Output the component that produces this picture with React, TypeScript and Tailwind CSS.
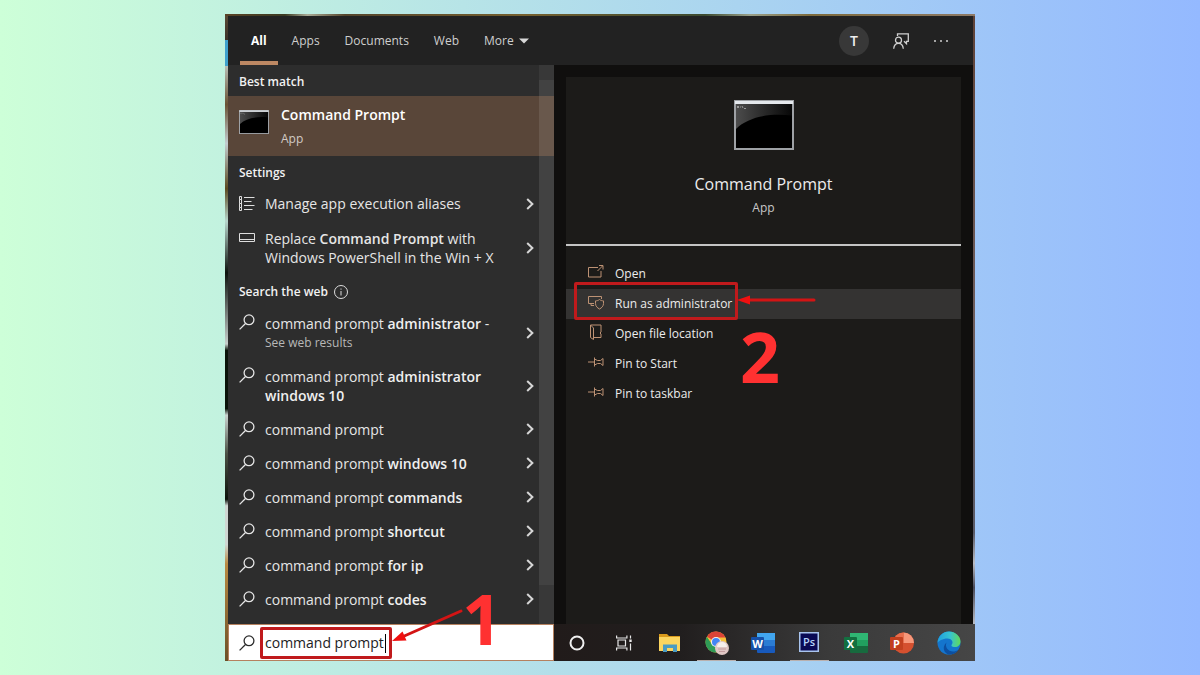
import { useState, type ReactNode } from 'react';

interface SearchResult {
  query: string;
  suffix?: string;
  tail?: string;
  note?: string;
  tall?: boolean;
}

const tabs = ['All', 'Apps', 'Documents', 'Web', 'More'];

const webResults: SearchResult[] = [
  { query: 'command prompt', suffix: 'administrator', tail: ' -', note: 'See web results', tall: true },
  { query: 'command prompt', suffix: 'administrator windows 10', tall: true },
  { query: 'command prompt' },
  { query: 'command prompt', suffix: 'windows 10' },
  { query: 'command prompt', suffix: 'commands' },
  { query: 'command prompt', suffix: 'shortcut' },
  { query: 'command prompt', suffix: 'for ip' },
  { query: 'command prompt', suffix: 'codes' },
];

function SearchIcon() {
  return (
    <svg className="h-4 w-4 shrink-0" viewBox="0 0 16 16" fill="none" stroke="currentColor" strokeWidth="1.3">
      <circle cx="10" cy="5.8" r="4.9" />
      <path d="M6.5 9.5 0.6 15.4" />
    </svg>
  );
}

function ChevronIcon() {
  return (
    <svg className="h-3 w-2 shrink-0" viewBox="0 0 8 12" fill="none" stroke="#d6d6d6" strokeWidth="2">
      <path d="M1.2 1 6.4 6 1.2 11" />
    </svg>
  );
}

function ListIcon() {
  return (
    <svg className="h-4 w-4 shrink-0" viewBox="0 0 16 16" fill="none" stroke="#dedede">
      <path d="M0.5 0.5h2v3h-2zM0.5 3.5h2v4h-2zM0.5 7.500h2v4h-2zM0.5 11.500h2v3h-2z" />
      <path d="M5 1.500h10.5M5 5.500h7.5M5 9.500h10.5M5 13.500h8.5" />
    </svg>
  );
}

function PanelIcon() {
  return (
    <svg className="h-4 w-4 shrink-0" viewBox="0 0 16 16" fill="none" stroke="#dedede">
      <path d="M0.5 2.5h15v8h-15zM0.5 8.5h15" />
    </svg>
  );
}

function ConsoleIcon({ className }: { className: string }) {
  return (
    <svg className={className} viewBox="0 0 60 50" preserveAspectRatio="none">
      <defs>
        <linearGradient id="shine" x1="0" y1="0" x2="1" y2="0">
          <stop offset="0" stopColor="#4c4c4c" />
          <stop offset="1" stopColor="#070707" />
        </linearGradient>
      </defs>
      <rect width="60" height="50" fill="#9ea1a5" />
      <rect x="1" y="1" width="58" height="3" fill="#e4e8ec" />
      <rect x="2" y="4" width="56" height="44" fill="#000" />
      <path d="M2 4h56v11.500C34 13 14 17 2 29z" fill="url(#shine)" />
      <path d="M3 6.500h2M3 7.500h2M6 7h1M8 6l1 2M10 8.500h2" stroke="#999" strokeWidth="1" fill="none" />
    </svg>
  );
}

function ActionIcon({ children }: { children: ReactNode }) {
  return (
    <svg className="mb-1 h-4 w-4 shrink-0" viewBox="0 0 16 16" fill="none" stroke="#bd9274" strokeWidth="1">
      {children}
    </svg>
  );
}

const pinShape = <path d="M0 8h6M6.500 3.500v9M6.500 5l3 1.500h3L15 4.500v7l-2.500-2h-3l-3 1.500" />;

const actions = [
  {
    label: 'Open',
    icon: <path d="M10 3.500H0.500v9.500h12.500V7M9.500 7l5-5M11 1.500h4v4" />,
  },
  {
    label: 'Run as administrator',
    icon: (
      <>
        <path d="M6 9.500H0.500v-7h13v2.500M3 9.500v2h3" />
        <path d="M11.500 5.500c-1.200 1-2.500 1.300-4 1.400v2.600c0 2.600 1.800 4.400 4 5.500 2.200-1.100 4-2.900 4-5.500V6.900c-1.500-.1-2.800-.4-4-1.400z" />
      </>
    ),
  },
  {
    label: 'Open file location',
    icon: <path d="M5.500 13.500h7.500v-3.500l-1-1 1-1V1H2.500v12.500l3 2V4L2.500 1" />,
  },
  { label: 'Pin to Start', icon: pinShape },
  { label: 'Pin to taskbar', icon: pinShape },
];

function Heading({ children }: { children: ReactNode }) {
  return (
    <h2 className="flex h-[31px] items-center gap-[6px] pt-[2px] pl-[11px] text-xs font-semibold text-[#f2f2f2]">
      {children}
    </h2>
  );
}

function OfficeIcon({ letter, dark, mid, light, tile }: { letter: string; dark: string; mid: string; light: string; tile: string }) {
  return (
    <svg className="h-6 w-6" viewBox="0 0 24 24">
      <rect x="6" y="2" width="18" height="20" rx="1" fill={dark} />
      <rect x="6" y="2" width="18" height="7" fill={light} />
      <rect x="6" y="9" width="18" height="6" fill={mid} />
      <rect x="0" y="6" width="13" height="13" rx="1" fill={tile} />
      <text x="6.500" y="16.500" textAnchor="middle" fontSize="11" fontWeight="700" fill="#fff">{letter}</text>
    </svg>
  );
}

const taskbarApps = [
  {
    name: 'Cortana',
    icon: (
      <svg className="h-4 w-4" viewBox="0 0 16 16" fill="none" stroke="#f0f0f0" strokeWidth="2">
        <circle cx="8" cy="8" r="6.500" />
      </svg>
    ),
  },
  {
    name: 'Task view',
    icon: (
      <svg className="h-4 w-4" viewBox="0 0 16 16" fill="none" stroke="#e6e6e6" strokeWidth="1.2">
        <path d="M0.600 0.500v2.500h10.300V0.500M0.600 15.500V13h10.300v2.500M2 5h7.500v6H2zM14.500 0.500v3M14.500 8.500v7" />
        <path d="M13.300 4.500h2.400v2.500h-2.400z" fill="#e6e6e6" stroke="none" />
      </svg>
    ),
  },
  {
    name: 'File Explorer',
    icon: (
      <svg className="h-5 w-6" viewBox="0 0 24 20">
        <path d="M1 1h8l2 2h11v4H1z" fill="#d99a1c" />
        <path d="M1 4h21v14H1z" fill="#fbd55f" />
        <path d="M5 19v-7.500h14V19h-4v-4H9v4z" fill="#4a9bc2" />
      </svg>
    ),
  },
  {
    name: 'Chrome',
    active: true,
    icon: (
      <svg className="h-6 w-6" viewBox="0 0 24 24">
        <circle cx="11" cy="11" r="10.500" fill="#f5c23a" />
        <path d="M11 11 1.900 5.700A10.500 10.500 0 0 1 20.500 6.500H11z" fill="#dc4437" />
        <path d="M11 11 7 13.500 1.900 5.700A10.500 10.500 0 0 0 11 21.500l4-8z" fill="#2f9c56" />
        <circle cx="11" cy="11" r="5" fill="#f3f3f3" />
        <circle cx="11" cy="11" r="4" fill="#4285f4" />
        <circle cx="17" cy="17" r="7" fill="#e0c7c5" />
        <path d="M12 16a5 5 0 0 1 10 0z" fill="#f6efec" />
        <path d="M13 18h8M14 20.500h6" stroke="#c49d9f" />
      </svg>
    ),
  },
  { name: 'Word', icon: <OfficeIcon letter="W" light="#41a5ee" mid="#2b7cd3" dark="#185abd" tile="#1650a8" /> },
  {
    name: 'Photoshop',
    active: true,
    icon: (
      <svg className="mb-[2px] h-5 w-5" viewBox="0 0 20 20">
        <rect x="0.750" y="0.750" width="18.500" height="18.500" fill="#0a0a55" stroke="#a9c4ee" strokeWidth="1.500" />
        <text x="10" y="14" textAnchor="middle" fontSize="11" fontWeight="600" fill="#b5d2fa">Ps</text>
      </svg>
    ),
  },
  { name: 'Excel', icon: <OfficeIcon letter="X" light="#2fb673" mid="#21a05f" dark="#176a3e" tile="#127040" /> },
  {
    name: 'PowerPoint',
    icon: (
      <svg className="h-6 w-6" viewBox="0 0 24 24">
        <circle cx="13.500" cy="12" r="10.500" fill="#d5502f" />
        <path d="M13.500 1.500A10.500 10.500 0 0 1 24 12H13.500z" fill="#f6977a" />
        <path d="M13.500 1.500A10.500 10.500 0 0 0 3 12h10.500z" fill="#e86d4c" />
        <rect x="0" y="6" width="13" height="13" rx="1" fill="#c2401f" />
        <text x="6.500" y="16.500" textAnchor="middle" fontSize="11" fontWeight="700" fill="#fff">P</text>
      </svg>
    ),
  },
  {
    name: 'Edge',
    icon: (
      <svg className="h-6 w-6" viewBox="0 0 24 24">
        <defs>
          <linearGradient id="edgeTop" x1="0" y1="0.500" x2="1" y2="0.500">
            <stop offset="0" stopColor="#1f9fdf" />
            <stop offset="0.550" stopColor="#36c3d0" />
            <stop offset="1" stopColor="#62d957" />
          </linearGradient>
        </defs>
        <circle cx="12" cy="12" r="11.500" fill="#1475cd" />
        <path d="M0.500 12C1 5 6 0.500 12 0.500S23.500 5 23.500 10.500c0 3.500-2.500 5.500-5.500 5.500-3.500 0-4-1.500-3.200-2.500 2-2.500-.3-6-4.300-6C5.500 7.500 1.500 10 0.500 12z" fill="url(#edgeTop)" />
        <path d="M9.500 11.500c-2 4.500 1.500 9 6.500 9 2.300 0 4-.8 5.500-1.800C19 22 16 23.500 12 23.500 7 22.500 4.500 16 9.500 11.500z" fill="#0c4fa0" />
      </svg>
    ),
  },
];

export default function App() {
  const [activeTab, setActiveTab] = useState('All');
  const [query, setQuery] = useState('command prompt');

  return (
    <div className="flex min-h-screen items-center justify-center bg-[linear-gradient(90deg,#cdffd8,#94b9ff)] font-['Open_Sans','Noto_Sans',sans-serif]">
      {/* Desktop behind the search window */}
      <div className="w-5/8 bg-[linear-gradient(180deg,#5b4a35_0%,#3b3128_4%,#3fa0cc_4%,#3fa0cc_8%,#b9bdb4_8%,#6a5335_14%,#c3cdd0_20%,#5b4a20_27%,#b7d6cc_32%,#0d120d_40%,#c7cfcc_51%,#0a1309_52%,#0a1309_61%,#c9d3cf_62%,#4a5044_68%,#0c120b_75%,#cfd6d2_76%,#cfd6d2_82%,#b98a42_85%,#6b4f28_100%)]">
        <div className="bg-[linear-gradient(90deg,#5a4326,#3b3a22_8%,#a9aa96_11%,#55452c_16%,#76602f_40%,#3c4a30_64%,#9aa08a_70%,#7d6a3c_78%,#8e7a66_100%)] bg-[length:100%_2px] bg-no-repeat pt-[2px] pl-[3px]">
          <div className="bg-[linear-gradient(180deg,#5f4238,#6e5d5c_50%,#5a5a66_85%,#b9bcc4_90%,#4a4a58_94%,#b9bcc4)] pr-[2px]">
            {/* Tabs */}
            <header className="flex h-[49px] items-center justify-between bg-[#222222] pl-3 pr-6">
              <nav className="flex h-full gap-[3px] text-xs">
                {tabs.map(tab => (
                  <button
                    key={tab}
                    onClick={() => setActiveTab(tab)}
                    className={
                      tab === activeTab
                        ? 'flex items-center border-b-4 border-[#bd8863] px-[11px] pt-1 font-bold text-white'
                        : 'flex items-center gap-[5px] border-b-4 border-transparent px-[11px] pt-1 text-[#cfcfcf]'
                    }
                  >
                    {tab}
                    {tab === 'More' && (
                      <svg className="h-[6px] w-[10px]" viewBox="0 0 10 6" fill="#d8d8d8">
                        <path d="M0 0.500h10L5 5.500z" />
                      </svg>
                    )}
                  </button>
                ))}
              </nav>
              <div className="flex items-center gap-6 text-[#d0d0d0]">
                <button aria-label="Account" className="flex h-[30px] w-[30px] items-center justify-center rounded-full bg-[#383838] text-sm font-semibold text-[#efefef]">
                  T
                </button>
                <button aria-label="Feedback">
                  <svg className="h-4 w-4" viewBox="0 0 16 16" fill="none" stroke="currentColor" strokeWidth="1.300">
                    <path d="M4.500 3V0.800h10.800v7.500h-1.800v2.500L11 8.300" />
                    <circle cx="5.500" cy="7.200" r="3" />
                    <path d="M0.700 15.800c.3-3.200 2-5.400 4.800-5.400s4.500 2.200 4.800 5.400" />
                  </svg>
                </button>
                <button aria-label="Options">
                  <svg className="h-4 w-4" viewBox="0 0 16 16" fill="currentColor">
                    <circle cx="2" cy="8" r="1" />
                    <circle cx="8" cy="8" r="1" />
                    <circle cx="14" cy="8" r="1" />
                  </svg>
                </button>
              </div>
            </header>

            <div className="flex bg-[#100f0e]">
              {/* Results */}
              <section className="relative w-[326px] shrink-0 bg-[#2d2d2d] pb-2 text-[#e6e6e6]">
                <Heading>Best match</Heading>
                <button className="flex h-[60px] w-full gap-3 bg-[#594639] pl-[11px] text-left">
                  <ConsoleIcon className="mt-[14px] h-6 w-[30px]" />
                  <span className="pt-[9px]">
                    <span className="block text-sm font-semibold text-white">Command Prompt</span>
                    <span className="mt-[6px] block text-xs text-[#d2cbc6]">App</span>
                  </span>
                </button>
                <Heading>Settings</Heading>
                <button className="flex h-[34px] w-full items-center gap-[10px] pl-[11px] pr-5 text-left text-sm">
                  <ListIcon />
                  <span className="flex-1">Manage app execution aliases</span>
                  <ChevronIcon />
                </button>
                <button className="flex h-[54px] w-full items-center gap-[10px] pl-[11px] pr-5 text-left text-sm leading-[19px]">
                  <span className="self-start pt-[10px]">
                    <PanelIcon />
                  </span>
                  <span className="flex-1">
                    Replace <span className="font-semibold">Command Prompt</span> with
                    <br />
                    Windows PowerShell in the Win + X
                  </span>
                  <ChevronIcon />
                </button>
                <Heading>
                  Search the web
                  <svg className="h-[14px] w-[14px]" viewBox="0 0 14 14" fill="none" stroke="#dcdcdc">
                    <circle cx="7" cy="7" r="6.500" />
                    <path d="M7 6v4.500M7 3.500v1.200" />
                  </svg>
                </Heading>
                {webResults.map((result, i) => (
                  <button
                    key={i}
                    className={
                      result.tall
                        ? 'flex h-[53px] w-full items-center gap-[10px] pl-[11px] pr-5 text-left text-sm leading-[19px]'
                        : 'flex h-[34px] w-full items-center gap-[10px] pl-[11px] pr-5 text-left text-sm leading-[19px]'
                    }
                  >
                    <span className={result.tall ? 'self-start pt-2' : ''}>
                      <SearchIcon />
                    </span>
                    <span className="flex-1">
                      <span className="block max-w-[236px]">
                        {result.query} <span className="font-semibold text-[#f0f0f0]">{result.suffix}</span>
                        {result.tail}
                      </span>
                      {result.note && <span className="block text-xs leading-[19px] text-[#b8b8b8]">{result.note}</span>}
                    </span>
                    <ChevronIcon />
                  </button>
                ))}
                {/* Scrollbar */}
                <div className="absolute inset-y-0 right-0 w-[15px] bg-white/5">
                  <div className="mt-[15px] h-[505px] bg-white/5" />
                </div>
              </section>

              {/* Details */}
              <section className="flex-1 pl-3 pr-3 pt-3">
                <div className="h-full bg-[#1c1b19]">
                  <div className="flex h-[169px] flex-col items-center border-b-2 border-[#c4c4c4] pt-[23px]">
                    <ConsoleIcon className="h-[50px] w-[60px]" />
                    <h1 className="mt-[22px] text-base text-[#ececec]">Command Prompt</h1>
                    <p className="mt-1 text-xs text-[#c8c8c8]">App</p>
                  </div>
                  <ul className="pt-[13px] text-xs text-[#ececec]">
                    {actions.map(action => {
                      const highlighted = action.label === 'Run as administrator';
                      return (
                        <li key={action.label} className="relative">
                          <button
                            className={
                              highlighted
                                ? 'flex h-[30px] w-full items-center gap-[11px] bg-[#343332] pl-[22px]'
                                : 'flex h-[30px] w-full items-center gap-[11px] pl-[22px]'
                            }
                          >
                            <ActionIcon>{action.icon}</ActionIcon>
                            {action.label}
                          </button>
                          {highlighted && (
                            <>
                              <div className="pointer-events-none absolute -top-[7px] left-2 h-[38px] w-[164px] rounded-xs border-[3px] border-[#c01a1c]" />
                              <svg className="pointer-events-none absolute left-[171px] top-[5px] h-3 w-20" viewBox="0 0 80 12">
                                <path d="M10 6h67" stroke="#d31414" strokeWidth="3" strokeLinecap="round" />
                                <path d="M0 6 13 1.500v9z" fill="#f01010" />
                              </svg>
                              <span className="pointer-events-none absolute left-[174px] top-8 text-[70px] leading-[70px] font-bold text-[#ff3131]">
                                2
                              </span>
                            </>
                          )}
                        </li>
                      );
                    })}
                  </ul>
                </div>
              </section>
            </div>
          </div>

          {/* Taskbar */}
          <footer className="flex h-[37px]">
            <div className="relative flex w-[326px] shrink-0 items-center gap-[5px] border border-[#b5815f] bg-white pl-[10px] text-[#2b2b2b]">
              <SearchIcon />
              <input
                type="text"
                aria-label="Search"
                value={query}
                onChange={e => setQuery(e.target.value)}
                className="h-8 w-[132px] rounded-xs border-[3px] border-[#c01a1c] bg-white pl-[2px] text-sm text-[#222222] outline-none"
              />
              <span className="absolute left-[156px] top-[9px] h-[19px] w-px bg-black" />
              <svg className="pointer-events-none absolute left-[163px] -top-4 h-9 w-[72px]" viewBox="0 0 72 36">
                <path d="M10 28 69 2" stroke="#d31414" strokeWidth="3" strokeLinecap="round" />
                <path d="M0 32 10.500 22.500l4 9z" fill="#f01010" />
              </svg>
              <span className="pointer-events-none absolute -top-[42px] left-[233px] text-[70px] leading-[70px] font-bold text-[#ff3131]">
                1
              </span>
            </div>
            <div className="grid flex-1 grid-cols-9 bg-[linear-gradient(90deg,#211b1a,#211e1e_30%,#3a3a3a_65%,#464646)] pr-[3px]">
              {taskbarApps.map(app => (
                <button key={app.name} aria-label={app.name} className="relative flex items-center justify-center">
                  {app.icon}
                  {app.active && <span className="absolute inset-x-1 bottom-0 h-px bg-[#b9b0ae]" />}
                </button>
              ))}
            </div>
          </footer>
        </div>
      </div>
    </div>
  );
}
